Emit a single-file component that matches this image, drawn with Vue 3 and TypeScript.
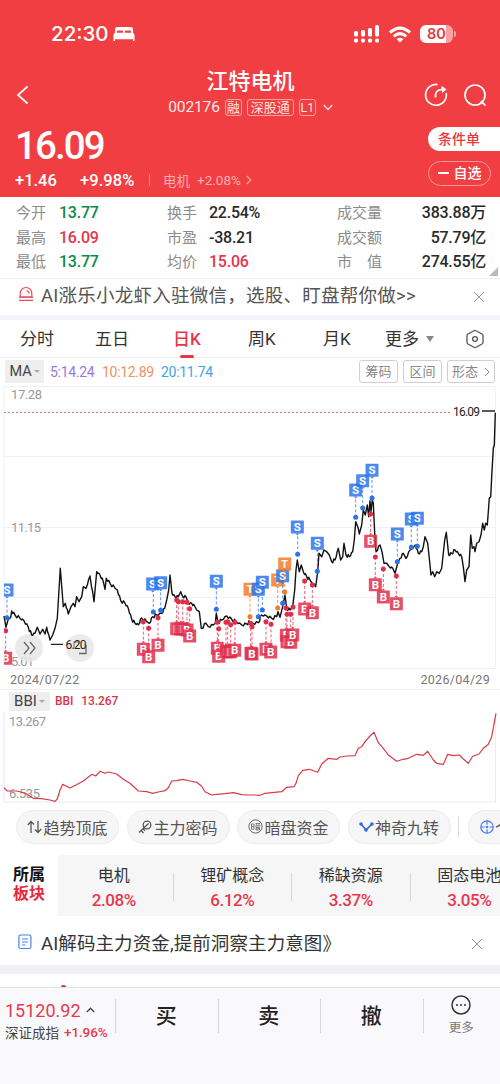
<script setup lang="ts">
type Kind = 'S' | 'B' | 'T'
interface Marker { kind: Kind; x: number; y: number; dx: number; dy: number }

const trace = (ox: number, oy: number, raw: string): [number, number][] =>
  raw.split(' ').map((p) => {
    const [x, y] = p.split(',').map(Number)
    return [ox + x / 3, oy + y / 3]
  })

const priceAnchors = [
  ...trace(0, 540, '12,228 18,262 24,240 32,232 35,213 45,225 60,235 72,242 85,262 95,285 105,280 112,262 120,282 128,268 135,282 140,262 150,300 158,285 165,265 172,235 177,150 181,85 186,150 190,200 196,190 205,222 213,200 220,190 225,200 230,170 237,185 245,170 250,140 258,145 270,108 282,185 290,95 300,105 310,125 315,148 319,115 330,130 345,145 352,150 362,182 375,190 385,205 395,238'),
  ...trace(130, 480, '15,430 25,434 35,414 50,425 58,430 68,410 80,405 95,400 104,385 110,360 116,330 120,285 126,340 135,350 145,350 152,335 158,350 168,350 175,370 185,370 195,380 200,390 208,395 214,445 228,430 235,440 250,435 256,430 259,400 264,428 275,420 290,408 305,418 318,425 335,435 350,432 360,425 368,430 385,428 395,405 410,408 425,415 440,410 444,395 450,412 458,380 465,345 470,385 480,390 488,380 494,330 498,270 502,240 508,275'),
  ...trace(300, 400, '4,495 10,515 20,530 30,540 47,560 53,515 57,460 65,470 72,450 80,455 88,465 95,485 105,480 115,445 122,480 128,470 132,430 138,465 148,470 158,455 163,420 167,365 175,385 178,402 185,375 190,330 196,345 202,315 206,350 210,302 213,335 217,300 220,310 224,400 228,455 240,435 246,455 252,490 260,490 268,500 278,505 285,520 293,490 300,475 310,460 318,475 330,450 338,445 346,435 355,460 365,455 370,440 375,410 383,430 388,475 393,525 398,515 404,530 410,515 418,520 425,505 430,460 434,420 439,397 446,465 455,460 465,450 475,460 485,470 490,500 495,545 500,510 507,500 512,405 517,445 522,440 525,455 530,430 537,425 543,405 548,370 553,390 557,370 562,375 566,320 568,295 572,290 575,230 580,145 583,135 586,38'),
]

const toPoints = (pts: [number, number][]) => pts.map(([x, y]) => `${x.toFixed(1)},${y.toFixed(1)}`).join(' ')

const priceLine = toPoints(
  priceAnchors.flatMap((p, i) => {
    const next = priceAnchors[i + 1]
    if (!next || next[0] - p[0] < 2.8) return [p]
    const gap = next[0] - p[0]
    const rise = next[1] - p[1]
    const sway = 0.8 + (i % 3) * 0.4
    return [
      p,
      [p[0] + gap * 0.35, p[1] + rise * 0.35 + sway] as [number, number],
      [p[0] + gap * 0.65, p[1] + rise * 0.65 - sway] as [number, number],
    ]
  }),
)

const bbiLine = toPoints([
  ...trace(0, 685, '12,308 22,318 50,318 75,324 100,340 125,341 150,345 165,349 172,342 180,315 188,298 210,309 228,300 250,288 276,268 287,273 300,259 315,265 325,261 350,267 370,283 390,295 415,318 440,320 458,325 475,321 495,317 505,308 515,288 530,287 548,283 570,288 590,292 605,304 615,320 635,330 650,328 675,326 700,323 725,329 750,330'),
  ...trace(250, 685, '15,330 30,331 45,325 95,320 110,307 132,305 138,295 145,272 158,256 178,253 203,262 215,237 235,220 260,223 270,216 292,213 315,212 325,190 335,185 345,170 360,153 372,142 385,173 400,190 415,210 440,229 460,223 475,220 500,208 520,211 533,199 550,225 560,235 580,238 593,208 610,212 628,210 640,222 655,235 668,214 687,207 700,190 715,178 725,155 738,85'),
])

const marks = (ox: number, oy: number, raw: string): Marker[] =>
  raw.split(' ').map((s) => {
    const [x, y, dx, dy] = s.slice(1).split(',').map(Number)
    return { kind: s[0] as Kind, x: ox + x / 3, y: oy + y / 3, dx: ox + dx / 3, dy: oy + dy / 3 }
  })

const markers: Marker[] = [
  ...marks(0, 540, 'S21,150,21,233 B17,355,17,272 S458,132,460,216 S482,128,482,211 B430,328,430,245 B446,350,446,265 B474,316,474,233'),
  ...marks(130, 480, 'B140,446,140,360 B152,447,145,365 B160,447,158,365 B171,450,171,367 B179,468,179,386 S259,304,259,388 B262,505,262,427 B266,529,266,446 B288,515,288,427 B296,515,293,425 B302,515,302,434 B314,511,315,427 T360,328,360,410 B363,520,362,430 B366,522,366,440 S385,328,385,410 S397,307,397,390 B408,508,408,425 B422,516,423,433 T443,300,443,384 S458,287,458,370 T464,252,464,336 B469,466,468,384 B471,485,471,403 B482,487,482,403 B488,465,489,381 S502,141,503,223 S562,190,562,274 B524,387,524,303 B547,398,547,315'),
  ...marks(300, 400, 'S167,270,167,352 S188,242,188,324 S216,211,216,294 B212,424,212,342 B226,554,226,471 B250,591,250,507 B289,611,289,528 S292,402,292,485 S334,357,334,442 S352,355,352,439'),
]

const stats = [
  ['今开', '13.77', 'green', '换手', '22.54%', '', '成交量', '383.88万'],
  ['最高', '16.09', 'red', '市盈', '-38.21', '', '成交额', '57.79亿'],
  ['最低', '13.77', 'green', '均价', '15.06', 'red', '市　值', '274.55亿'],
]
const sectors = [
  ['电机', '2.08%'],
  ['锂矿概念', '6.12%'],
  ['稀缺资源', '3.37%'],
  ['固态电池', '3.05%'],
]
</script>

<template>
  <div class="page">
    <header class="head">
      <div class="status">
        <span class="clock">22:30</span>
        <svg class="bed" width="22" height="16" viewBox="0 0 22 16" fill="#fff">
          <path d="M2 7V3.200Q2 1 4.200 1H17.800Q20 1 20 3.200V7H18V5.600Q18 4.400 16.800 4.400H13Q11.800 4.400 11.800 5.600V7H10.200V5.600Q10.200 4.400 9 4.400H5.200Q4 4.400 4 5.600V7Z" />
          <path d="M.5 15V9.800Q.5 6.800 2.700 6.800H19.300Q21.500 6.800 21.500 9.800V15H20V13.300H2V15Z" />
        </svg>
        <svg class="signal" width="26" height="18" viewBox="0 0 26 18" fill="#fff">
          <rect x="0" y="6" width="4" height="5.500" rx="1.500" /><rect x="7" y="5" width="4" height="6.500" rx="1.500" />
          <rect x="14" y="3" width="4" height="8.500" rx="1.500" /><rect x="21" y="0" width="4" height="11.500" rx="1.500" />
          <rect x="0" y="13.500" width="4" height="4" rx="1.500" /><rect x="7" y="13.500" width="4" height="4" rx="1.500" />
          <rect x="14" y="13.500" width="4" height="4" rx="1.500" /><rect x="21" y="13.500" width="4" height="4" rx="1.500" />
        </svg>
        <svg class="wifi" width="24" height="17" viewBox="0 0 24 17" fill="none" stroke="#fff" stroke-width="3">
          <path d="M2 6.500Q12 -2.300 22 6.500" /><path d="M5.700 10.300Q12 5 18.300 10.300" />
          <path d="M8.500 13Q12 10.500 15.500 13L12 16.500Z" fill="#fff" stroke="none" />
        </svg>
        <span class="battery">80</span><i class="nub" />
      </div>
      <div class="nav">
        <svg class="back" width="14" height="20" viewBox="0 0 14 20" fill="none" stroke="#fff" stroke-width="1.700"><path d="M11.500 1.500L2 10L11.500 18.500" /></svg>
        <div class="title">
          <h1>江特电机</h1>
          <p><span class="code">002176</span><b class="one">融</b><b class="three">深股通</b><b class="one lv">L1</b>
            <svg width="10" height="7" viewBox="0 0 10 7" fill="none" stroke="#fff" stroke-opacity=".85" stroke-width="1.200"><path d="M.8 1L5 5.500L9.200 1" /></svg>
          </p>
        </div>
        <div class="tools">
          <svg width="24" height="24" viewBox="0 0 24 24" fill="none" stroke="#fff" stroke-width="1.700">
            <path d="M13.500 1.600A10.400 10.400 0 1 0 22.200 10" /><path d="M11.500 14.500Q10.600 6.600 18.500 6.400" /><path d="M17.500 2.800L22.500 6.400L18 10Z" fill="#fff" stroke="none" />
          </svg>
          <svg width="24" height="24" viewBox="0 0 24 24" fill="none" stroke="#fff" stroke-width="1.700">
            <circle cx="12" cy="12" r="10" /><path d="M17.800 18.200L22.500 22.500" />
          </svg>
        </div>
      </div>
      <div class="quote">
        <div class="left">
          <div class="price">16.09</div>
          <div class="change">
            <span class="c1">+1.46</span><span class="c2">+9.98%</span><i /><span class="ind">电机</span><span class="indv">+2.08%</span>
            <svg width="6" height="10" viewBox="0 0 6 10" fill="none" stroke="#f9a9a9" stroke-width="1.200"><path d="M.8 1L4.800 5L.8 9" /></svg>
          </div>
        </div>
        <div class="actions">
          <span class="order">条件单</span>
          <span class="fav"><i />自选</span>
        </div>
      </div>
    </header>

    <section class="stats">
      <div v-for="r in stats" :key="r[0]" class="srow">
        <span>{{ r[0] }}</span><b :class="r[2]">{{ r[1] }}</b><span>{{ r[3] }}</span><b :class="r[5]">{{ r[4] }}</b><span>{{ r[6] }}</span><b class="end">{{ r[7] }}</b>
      </div>
      <i class="corner" />
    </section>

    <section class="notice top">
      <svg width="16" height="16" viewBox="0 0 16 16" fill="none" stroke="#ea4b5b" stroke-width="1.200">
        <path d="M2.200 11V7.300A5.800 5.800 0 0 1 13.800 7.300V11Z" /><path d="M8.500 4.600Q10.800 5 11.200 7.500M1 11.100H15M1 14.400H15" />
      </svg>
      <span>AI涨乐小龙虾入驻微信，选股、盯盘帮你做&gt;&gt;</span>
      <svg class="close" width="12" height="12" viewBox="0 0 12 12" stroke="#999"><path d="M1 1L11 11M11 1L1 11" /></svg>
    </section>

    <nav class="tabs">
      <span>分时</span><span>五日</span><span class="on">日K</span><span>周K</span><span>月K</span>
      <span class="more">更多<i /></span>
      <svg width="18" height="20" viewBox="0 0 18 20" fill="none" stroke="#555" stroke-width="1.300"><path d="M8 1.700Q9 1.100 10 1.700L16 5Q17 5.600 17 6.700V13.300Q17 14.400 16 15L10 18.300Q9 18.900 8 18.300L2 15Q1 14.400 1 13.300V6.700Q1 5.600 2 5Z" /><circle cx="9" cy="10" r="2.400" /></svg>
    </nav>

    <div class="ma">
      <span class="pick">MA<i /></span>
      <span class="m5">5:14.24</span><span class="m10">10:12.89</span><span class="m20">20:11.74</span>
      <div class="btns"><b>筹码</b><b>区间</b><b class="shape">形态<svg width="6" height="10" viewBox="0 0 6 10" fill="none" stroke="#888"><path d="M1 1L5 5L1 9" /></svg></b></div>
    </div>

    <svg class="chart" width="500" height="283" viewBox="0 386 500 283">
      <g stroke="#f1f1f3" stroke-width="1"><path d="M4 386.500H495.500M4 456.500H495.500M4 527.500H495.500M4 597.500H495.500M4 668.500H495.500M4 386V669M495.500 386V669" /></g>
      <g class="axis">
        <text x="11" y="398.500" textLength="31">17.28</text>
        <text x="11" y="532" textLength="30">11.15</text>
        <text x="11" y="665.500" textLength="23">5.01</text>
      </g>
      <path d="M4 412.500H452" stroke="#cf7f70" stroke-dasharray="2 2" />
      <circle cx="29" cy="648" r="14" fill="#e6e6e6" fill-opacity=".85" />
      <circle cx="80" cy="648" r="14" fill="#e6e6e6" fill-opacity=".85" />
      <path d="M24 642L29 648L24 654M30 642L35 648L30 654" fill="none" stroke="#666" stroke-width="1.300" />
      <path d="M86 645V653.500H79" fill="none" stroke="#666" stroke-width="1.300" />
      <path d="M74 648V642H79" fill="none" stroke="#777" stroke-width="1.100" />
      <path d="M51 644.300H63M482 411H495" stroke="#222" stroke-width="1.300" />
      <text class="tip" x="65.500" y="649" textLength="21">6.20</text>
      <text class="tip" x="453" y="415.500" textLength="27">16.09</text>
      <polyline :points="priceLine" fill="none" stroke="#111" stroke-width="1.400" stroke-linejoin="round" />
      <clipPath id="plot"><rect x="4" y="386" width="492" height="283" /></clipPath>
      <g clip-path="url(#plot)">
        <g v-for="(m, i) in markers" :key="i" :class="'mk ' + m.kind">
          <line :x1="m.dx" :y1="m.dy" :x2="m.dx" :y2="m.kind === 'B' ? m.y - 7 : m.y + 7" />
          <circle :cx="m.dx" :cy="m.dy" r="2.500" />
          <rect :x="m.x - 6.500" :y="m.y - 6.500" width="13" height="13" rx=".6" />
          <path :d="m.kind === 'B' ? `M${m.x - 2} ${m.y - 6.500}l2 -2l2 2z` : `M${m.x - 2} ${m.y + 6.500}l2 2l2 -2z`" />
          <text :x="m.x" :y="m.y + 4">{{ m.kind }}</text>
        </g>
      </g>
    </svg>
    <div class="dates"><span>2024/07/22</span><span>2026/04/29</span></div>

    <div class="bbi"><span class="pick">BBI<i /></span><b>BBI</b><b>13.267</b></div>
    <svg class="chart" width="500" height="91" viewBox="0 712 500 91">
      <path d="M4 712V802M495.500 712V802M4 802H496" stroke="#ececef" fill="none" />
      <g class="axis"><text x="9" y="726" textLength="37">13.267</text><text x="9" y="798" textLength="31">6.535</text></g>
      <polyline :points="bbiLine" fill="none" stroke="#d93a48" stroke-width="1.200" stroke-linejoin="round" />
    </svg>

    <div class="chips">
      <span class="chip"><svg width="15" height="14" viewBox="0 0 15 14" fill="none" stroke="#555" stroke-width="1.300"><path d="M4 13V1.500M.8 5L4 1.500L7 4.500M11 1V12.500M8 9.500L11 12.500L14.200 9" /></svg>趋势顶底</span>
      <span class="chip"><svg width="14" height="14" viewBox="0 0 14 14" fill="none" stroke="#555" stroke-width="1.300"><circle cx="9" cy="5" r="3.800" /><path d="M10.500 3.500L1 12.500M3 10.500L5.500 13M5 8.700L7 10.700" /></svg>主力密码</span>
      <span class="chip"><svg width="15" height="15" viewBox="0 0 15 15" fill="none" stroke="#666"><circle cx="7.500" cy="7.500" r="6.600" /><path d="M3.500 5H6V10.300H3.500ZM3.500 7.500H6M7.500 4.500H12M8.500 5L9 6.800M11 5L10.500 6.800M7 7H12.500M8 8.500H11.500V11H8ZM8 9.700H11.500" stroke-width=".8" /></svg>暗盘资金</span>
      <span class="chip"><svg width="15" height="12" viewBox="0 0 15 12" fill="none" stroke="#3568dc" stroke-width="1.700"><path d="M2 3L7 9L13 3" /><g fill="#3568dc" stroke="none"><circle cx="2" cy="3" r="1.800" /><circle cx="7" cy="9" r="1.800" /><circle cx="13" cy="3" r="1.800" /></g></svg>神奇九转</span>
      <i class="sep" />
      <span class="chip last"><svg width="14" height="14" viewBox="0 0 14 14" fill="none" stroke="#4a7af0" stroke-width="1.200"><circle cx="7" cy="7" r="6.200" /><path d="M7 .8V4.800M7 9.200V13.200M.8 7H4.800M9.200 7H13.200" /><circle cx="7" cy="7" r=".7" fill="#4a7af0" /></svg>个股</span>
    </div>

    <section class="sectors">
      <div class="lbl"><b>所属</b><b class="red">板块</b></div>
      <div class="list">
        <div v-for="s in sectors" :key="s[0]" class="sec"><span>{{ s[0] }}</span><b>{{ s[1] }}</b></div>
      </div>
    </section>

    <section class="notice low">
      <svg width="14" height="16" viewBox="0 0 14 16" fill="none" stroke="#4684f5" stroke-width="1.200"><rect x=".9" y="1" width="12" height="13.500" rx="1.800" /><path d="M4 5H10M4 8H10M4 11H7.500" /></svg>
      <span>AI解码主力资金,提前洞察主力意图》</span>
      <svg class="close" width="12" height="12" viewBox="0 0 12 12" stroke="#999"><path d="M1 1L11 11M11 1L1 11" /></svg>
    </section>
    <div class="peek"><i /></div>

    <footer class="bar">
      <div class="index">
        <div class="iv">15120.92<svg width="9" height="6" viewBox="0 0 9 6" fill="none" stroke="#444" stroke-width="1.300"><path d="M.8 5L4.500 1.200L8.200 5" /></svg></div>
        <div class="in">深证成指<b>+1.96%</b></div>
      </div>
      <div class="act">买</div><div class="act">卖</div><div class="act">撤</div>
      <div class="moreb">
        <svg width="20" height="20" viewBox="0 0 20 20" fill="none" stroke="#333" stroke-width="1.500"><circle cx="10" cy="10" r="9" /><g fill="#333" stroke="none"><circle cx="6" cy="10" r="1" /><circle cx="10" cy="10" r="1" /><circle cx="14" cy="10" r="1" /></g></svg>
        <span>更多</span>
      </div>
    </footer>
  </div>
</template>

<style>
body { margin: 0; background: #fff; }
</style>

<style scoped>
.page { width: 500px; height: 1084px; overflow: hidden; background: #fff; color: #333; font-family: Roboto, "Noto Sans CJK SC", sans-serif; box-sizing: border-box; }
.page * { box-sizing: border-box; }
svg { display: block; flex: none; }
i { display: block; flex: none; }
b { font-weight: 500; }
.red { color: #e63549; }
.green { color: #078c4c; }

.head { height: 197px; background: #f03e42; color: #fff; overflow: hidden; }
.status { display: flex; align-items: center; height: 68px; padding: 0 44px 0 51px; }
.clock { font: 500 20.500px/24px Inter, sans-serif; width: 62px; letter-spacing: 0; white-space: nowrap; }
.signal { margin-left: auto; }
.wifi { margin-left: 8px; }
.battery { margin-left: 8px; width: 33px; height: 18px; border-radius: 6px; background: linear-gradient(90deg, #fff 80%, #f8a1a3 80%); color: #e23a40; font: 600 14.500px/18px Inter, sans-serif; text-align: center; }
.nub { width: 2px; height: 6px; margin-left: 1px; border-radius: 0 2px 2px 0; background: #f8a1a3; }
.nav { display: flex; height: 52px; }
.back { margin: 17px 0 0 16px; }
.title { flex: 1; padding-left: 47px; text-align: center; }
.title h1 { margin: 1px 0 0; font-size: 22px; line-height: 26px; font-weight: 500; }
.title p { display: flex; justify-content: center; align-items: center; margin: 3px 0 0; height: 18px; font-size: 14px; }
.title p b { margin-left: 5px; height: 17px; border: 1px solid #f9a3a3; border-radius: 3px; font-size: 13px; line-height: 15px; font-weight: 400; color: #ffe4e2; text-align: center; white-space: nowrap; }
.title p .one { width: 17px; padding: 0 1px; }
.title p .three { width: 47px; }
.title p .lv { padding: 0; font-size: 12.500px; }
.title p svg { margin-left: 7px; }
.code { font-size: 15.500px; color: #ffe9e7; letter-spacing: -.1px; }
.tools { display: flex; gap: 15px; margin: 15px 13px 0 0; }
.quote { display: flex; justify-content: space-between; height: 77px; }
.left { padding-left: 15px; }
.price { margin-top: 5px; height: 42px; font-size: 38.500px; line-height: 42px; font-weight: 500; letter-spacing: -1.900px; }
.change { display: flex; align-items: center; height: 20px; margin-top: 3px; font-size: 16.500px; font-weight: 500; }
.c1 { width: 65px; }
.c2 { width: 69px; letter-spacing: .05px; }
.change i { width: 1px; height: 12px; background: #f78a8c; margin-right: 13px; }
.ind, .indv { font-size: 13.500px; font-weight: 400; color: #fbb0b0; margin-right: 7px; }
.indv { margin-right: 5px; }
.actions { width: 72px; padding-top: 7px; }
.order { display: block; height: 24px; border-radius: 12px 0 0 12px; background: #fff; color: #e8353f; font-size: 14px; line-height: 24px; padding-left: 10px; font-weight: 500; }
.fav { display: flex; align-items: center; justify-content: center; gap: 5px; margin-top: 10px; width: 63px; height: 25px; border: 1px solid #f79799; border-radius: 13px; font-size: 14px; line-height: 22px; padding-bottom: 1px; font-weight: 500; }
.fav i { width: 11px; height: 1.200px; background: #fff; }

.stats { position: relative; height: 82px; padding-top: 4px; border-bottom: 1px solid #eee; }
.srow { display: grid; grid-template-columns: 43px 108px 42px 128px 75px 74px; margin-left: 16px; height: 24.500px; line-height: 24.500px; font-size: 16px; }
.srow span { font-size: 15px; color: #8b8b8b; }
.srow b { letter-spacing: -.25px; white-space: nowrap; }
.srow b:not(.red):not(.green) { color: #292929; }
.srow .end { text-align: right; }
.corner { position: absolute; right: 2px; bottom: 2px; border: solid transparent; border-width: 0 0 9px 9px; border-bottom-color: #bbb; }

.notice { display: flex; align-items: center; padding: 0 18px; }
.notice span { flex: 1; white-space: nowrap; margin-left: 7px; font-size: 18.500px; letter-spacing: .25px; }
.top { height: 41px; padding-bottom: 6px; border-bottom: 5px solid #f3f4f9; color: #555; }
.low { height: 58px; padding: 3px 18px 1px; border-bottom: 9px solid #eff1f6; }
.low span { margin-left: 9px; letter-spacing: .1px; }
.top .close { margin: 5px -3px 0 0; }
.low .close { margin: 5px -1px 0 0; }

.tabs { display: flex; align-items: center; height: 38px; border-bottom: 1px solid #eee; padding-left: 20px; font-size: 17px; color: #333; line-height: 38px; }
.tabs > span { width: 75px; white-space: nowrap; }
.tabs .on { position: relative; width: 74px; padding-left: 3px; color: #ea3448; font-weight: 500; }
.tabs .on::after { content: ""; position: absolute; left: 10px; bottom: 0; width: 14px; height: 3px; border-radius: 2px; background: #ea3448; }
.tabs .on + span { padding-left: 4px; width: 79px; }
.tabs .more { display: flex; align-items: center; gap: 7px; width: 81px; margin-left: -13px; }
.more i, .pick i { border: solid transparent; border-width: 6px 4px 0; border-top-color: #888; }

.ma { display: flex; align-items: center; height: 28px; padding: 0 5px 1px 5px; font-size: 14px; }
.pick { display: flex; align-items: center; justify-content: center; background: #eee; color: #444; border-radius: 2px; }
.ma .pick { width: 39px; height: 23px; font-size: 14.500px; }
.pick i { border-width: 3px 3px 0; margin-left: 2px; border-top-color: #aaa; }
.m5 { width: 52px; margin-left: 6px; color: #9a77e2; }
.m10 { width: 59px; color: #ec9163; }
.m20 { color: #42a5e3; }
.ma > span:not(.pick) { white-space: nowrap; letter-spacing: -.3px; }
.btns { display: flex; gap: 5px; margin-left: auto; }
.btns b { width: 39px; height: 23px; border: 1px solid #cfcfcf; border-radius: 3px; font-size: 13px; line-height: 21px; font-weight: 400; text-align: center; color: #888; }
.btns .shape { display: flex; align-items: center; justify-content: center; gap: 6px; width: 48px; }

.axis text { font-size: 13px; fill: #999; }
.tip { font-size: 12px; fill: #222; }
.mk line { stroke-width: 1; stroke-dasharray: 3 2; opacity: .75; }
.mk rect, .mk path { opacity: .84; }
.mk text { fill: #fff; font-size: 11.500px; font-weight: 700; text-anchor: middle; }
.S { fill: #2b73ec; }
.S line { stroke: #2b73ec; }
.B { fill: #e02f4b; }
.B line { stroke: #e02f4b; }
.T { fill: #f77a25; }
.T line { stroke: #f77a25; }

.dates { display: flex; justify-content: space-between; height: 21px; padding: 0 10px; line-height: 21px; font-size: 12.500px; letter-spacing: .3px; color: #777; border-bottom: 1px solid #eee; }
.bbi { display: flex; align-items: center; height: 22px; padding-left: 9px; color: #d93549; font-size: 12px; }
.bbi .pick { width: 41px; height: 19px; font-size: 15px; margin-right: 5px; }
.bbi b { margin-right: 8px; letter-spacing: -.1px; }

.chips { display: flex; align-items: center; height: 52px; padding: 0 0 4px 16px; overflow: hidden; }
.chip { display: flex; align-items: center; justify-content: center; gap: 1px; flex: none; width: 103px; height: 34px; margin-right: 7.500px; padding-bottom: 1px; border: 1px solid #ececec; border-radius: 17px; background: #f6f6f7; font-size: 16px; color: #555; white-space: nowrap; }
.sep { width: 1px; height: 22px; background: #ddd; margin: 0 9px 0 0; }
.last { justify-content: flex-start; padding-left: 11px; }

.sectors { display: flex; height: 61px; }
.lbl { width: 58px; padding: 10px 0 0 13px; font-size: 16px; line-height: 19px; color: #111; }
.lbl b { display: block; font-weight: 700; line-height: 19px; }
.lbl .red { color: #e9283c; }
.list { display: flex; width: 442px; overflow: hidden; background: #f6f6f7; }
.sec { position: relative; flex: none; width: 118.500px; display: flex; flex-direction: column; align-items: center; padding: 9px 7px 0 0; font-size: 16px; line-height: 24px; }
.sec b { font-size: 17px; color: #e9384d; letter-spacing: -.4px; }
.sec + .sec::before { content: ""; position: absolute; left: -4px; top: 18px; width: 1px; height: 28px; background: #d8d8d8; }

.peek { height: 13px; padding: 11px 0 0 61px; }
.peek i { width: 5px; height: 2px; border-radius: 2px 2px 0 0; background: #d9344a; }
.bar { display: flex; height: 97px; background: #f9f9fb; border-top: 1px solid #e2e2e5; }
.index { width: 115px; padding: 10px 0 0 5px; }
.iv { display: flex; align-items: center; gap: 5px; height: 24px; font-size: 18px; color: #e9384d; }
.in { display: flex; align-items: center; height: 19px; font-size: 13.500px; white-space: nowrap; color: #444; }
.in b { margin-left: 5px; font-size: 13.500px; color: #e9384d; letter-spacing: -.1px; }
.act { position: relative; width: 102.500px; height: 57px; line-height: 56px; text-align: center; font-size: 21px; font-weight: 500; color: #222; }
.act::before { content: ""; position: absolute; left: 0; top: 11px; width: 1px; height: 34px; background: #d6d6d8; }
.moreb { position: relative; flex: 1; display: flex; flex-direction: column; align-items: center; padding: 7px 0 0; }
.moreb::before { content: ""; position: absolute; left: 0; top: 11px; width: 1px; height: 34px; background: #d6d6d8; }
.moreb span { margin-top: 2px; font-size: 12.500px; line-height: 22px; color: #777; }
</style>
